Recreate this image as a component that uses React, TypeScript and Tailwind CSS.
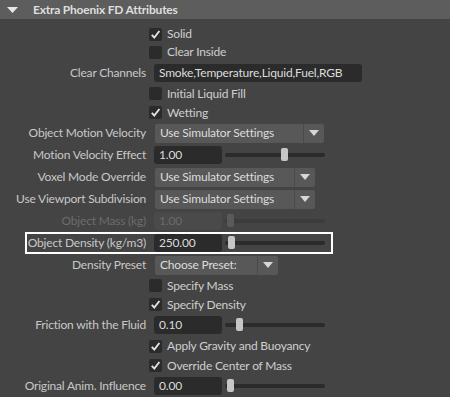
import type { ReactNode } from 'react';

function Check({ on }: { on: boolean }) {
  return (
    <div className="w-[13px] h-[13px] bg-[#2b2b2b] rounded-[2px] flex items-center justify-center">
      {on && (
        <svg width="11" height="11" viewBox="0 0 11 11">
          <path d="M1.8 5.8 L4.3 8.6 L9.4 2" fill="none" stroke="#e2e2e2" strokeWidth="1.9" />
        </svg>
      )}
    </div>
  );
}

function CheckRow({ label, on, h }: { label: string; on: boolean; h: string }) {
  return (
    <div className={`flex items-center pl-[149px] gap-[5px] ${h}`}>
      <Check on={on} />
      <span className="text-[#cfcfcf]">{label}</span>
    </div>
  );
}

function Row({ label, h, disabled, children }: { label: string; h: string; disabled?: boolean; children: ReactNode }) {
  return (
    <div className={`flex items-center ${h}`}>
      <div className={`w-[146px] text-right whitespace-nowrap ${disabled ? 'text-[#6c6c6c]' : 'text-[#c8c8c8]'}`}>{label}</div>
      <div className="ml-[8px] flex items-center">{children}</div>
    </div>
  );
}

function Field({ value, w, disabled }: { value: string; w: string; disabled?: boolean }) {
  return (
    <div
      className={`h-[18px] rounded-[3px] pl-[5px] flex items-center ${w} ${
        disabled ? 'bg-[#4a4a4a] text-[#6a6a6a]' : 'bg-[#2b2b2b] text-[#dcdcdc]'
      }`}
    >
      {value}
    </div>
  );
}

function Slider({ pos, disabled }: { pos: number; disabled?: boolean }) {
  return (
    <div className={`relative ml-[3px] w-[100px] h-[4px] rounded-full ${disabled ? 'bg-[#3c3c3c]' : 'bg-[#2b2b2b]'}`}>
      <div
        className={`absolute top-[-5px] w-[7px] h-[13px] rounded-[2px] ${disabled ? 'bg-[#5a5a5a]' : 'bg-[#c6c6c6]'}`}
        style={{ left: pos }}
      />
    </div>
  );
}

function Dropdown({ value, w }: { value: string; w: string }) {
  return (
    <div className={`h-[19px] flex items-stretch ml-[1px] ${w}`}>
      <div className="flex-1 bg-[#585858] rounded-l-[2px] pl-[5px] flex items-center text-[#dcdcdc] whitespace-nowrap">{value}</div>
      <div className="w-[1px] bg-[#4a4a4a]" />
      <div className="w-[20px] bg-[#585858] rounded-r-[2px] flex items-center justify-center">
        <svg width="10" height="6" viewBox="0 0 10 6">
          <path d="M0 0 H10 L5 6 Z" fill="#d6d6d6" />
        </svg>
      </div>
    </div>
  );
}

export default function App() {
  return (
    <div className="w-[450px] h-[397px] overflow-hidden bg-[#444444] font-['Lato',sans-serif] text-[12px] tracking-[-0.2px]">
      {/* Section header */}
      <div className="h-[19px] bg-[#5d5d5d] flex items-center">
        <svg className="ml-[7px]" width="11" height="6" viewBox="0 0 11 6">
          <path d="M0 0 H11 L5.5 6 Z" fill="#e8e8e8" />
        </svg>
        <span className="ml-[15px] font-bold text-[#dedede]">Extra Phoenix FD Attributes</span>
      </div>

      <div className="pt-[6px]">
        <CheckRow label="Solid" on h="h-[18px]" />
        <CheckRow label="Clear Inside" on={false} h="h-[18px]" />
        <Row label="Clear Channels" h="h-[23px]">
          <Field value="Smoke,Temperature,Liquid,Fuel,RGB" w="w-[208px]" />
        </Row>
        <CheckRow label="Initial Liquid Fill" on={false} h="h-[19px]" />
        <CheckRow label="Wetting" on h="h-[19px]" />
        <Row label="Object Motion Velocity" h="h-[22px]">
          <Dropdown value="Use Simulator Settings" w="w-[169px]" />
        </Row>
        <Row label="Motion Velocity Effect" h="h-[22px]">
          <Field value="1.00" w="w-[68px]" />
          <Slider pos={56} />
        </Row>
        <Row label="Voxel Mode Override" h="h-[22px]">
          <Dropdown value="Use Simulator Settings" w="w-[160px]" />
        </Row>
        <Row label="Use Viewport Subdivision" h="h-[22px]">
          <Dropdown value="Use Simulator Settings" w="w-[160px]" />
        </Row>
        <Row label="Object Mass (kg)" h="h-[22px]" disabled>
          <Field value="1.00" w="w-[68px]" disabled />
          <Slider pos={2} disabled />
        </Row>
        <div className="relative">
          <Row label="Object Density (kg/m3)" h="h-[22px]">
            <Field value="250.00" w="w-[68px]" />
            <Slider pos={3} />
          </Row>
          <div className="absolute left-[25px] top-0 w-[308px] h-[22px] border-2 border-white pointer-events-none" />
        </div>
        <Row label="Density Preset" h="h-[22px]">
          <Dropdown value="Choose Preset:" w="w-[123px]" />
        </Row>
        <CheckRow label="Specify Mass" on={false} h="h-[19px]" />
        <CheckRow label="Specify Density" on h="h-[19px]" />
        <Row label="Friction with the Fluid" h="h-[22px]">
          <Field value="0.10" w="w-[68px]" />
          <Slider pos={11} />
        </Row>
        <CheckRow label="Apply Gravity and Buoyancy" on h="h-[20px]" />
        <CheckRow label="Override Center of Mass" on h="h-[19px]" />
        <Row label="Original Anim. Influence" h="h-[22px]">
          <Field value="0.00" w="w-[68px]" />
          <Slider pos={2} />
        </Row>
      </div>
    </div>
  );
}
